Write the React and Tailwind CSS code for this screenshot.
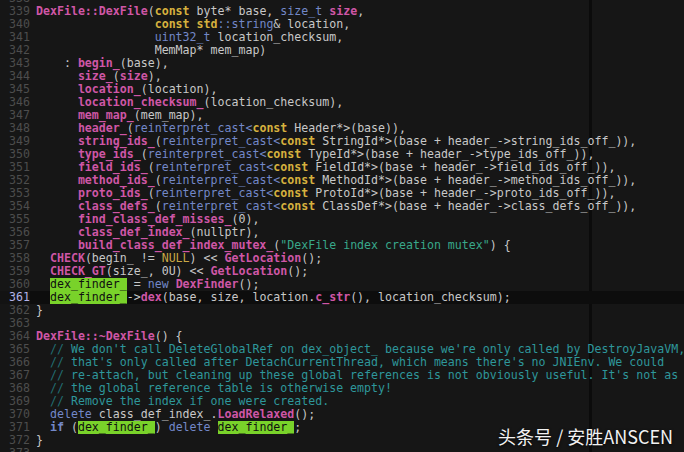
import React from 'react'

const P = 'text-[#cf56a6] font-bold'
const Y = 'text-[#d6b13e] font-bold'
const B = 'text-[#7388c8]'
const BB = 'text-[#7388c8] font-bold'
const S = 'text-[#38a88a]'
const C = 'text-[#2e979b]'
const CS = 'text-[#226e72]'
const N = 'text-[#c9a845]'
const G = 'inline-block h-[13px] align-top bg-[#79d22a] text-[#101010]'

const ind = (n) => ' '.repeat(n)

const cast = (name, type, off) => [
  [ind(6)],
  [name, P],
  ['('],
  ['reinterpret_cast<', B],
  ['const', Y],
  [` ${type}*>(base + header_->${off})),`]
]

const lines = [
  [338, []],
  [339, [['DexFile::DexFile', P], ['('], ['const', Y], [' byte* base, '], ['size_t', B], [' '], ['size', P], [',']]],
  [340, [[ind(17)], ['const', Y], [' '], ['std', Y], ['::string', B], ['& location,']]],
  [341, [[ind(17)], ['uint32_t', B], [' location_checksum,']]],
  [342, [[ind(17) + 'MemMap* mem_map)']]],
  [343, [['    : '], ['begin_', P], ['(base),']]],
  [344, [[ind(6)], ['size_', P], ['('], ['size', P], ['),']]],
  [345, [[ind(6)], ['location_', P], ['(location),']]],
  [346, [[ind(6)], ['location_checksum_', P], ['(location_checksum),']]],
  [347, [[ind(6)], ['mem_map_', P], ['(mem_map),']]],
  [348, [[ind(6)], ['header_', P], ['('], ['reinterpret_cast<', B], ['const', Y], [' Header*>(base)),']]],
  [349, cast('string_ids_', 'StringId', 'string_ids_off_')],
  [350, cast('type_ids_', 'TypeId', 'type_ids_off_')],
  [351, cast('field_ids_', 'FieldId', 'field_ids_off_')],
  [352, cast('method_ids_', 'MethodId', 'method_ids_off_')],
  [353, cast('proto_ids_', 'ProtoId', 'proto_ids_off_')],
  [354, cast('class_defs_', 'ClassDef', 'class_defs_off_')],
  [355, [[ind(6)], ['find_class_def_misses_', P], ['(0),']]],
  [356, [[ind(6)], ['class_def_index_', P], ['(nullptr),']]],
  [357, [[ind(6)], ['build_class_def_index_mutex_', P], ['('], ['"DexFile index creation mutex"', S], [') {']]],
  [358, [['  '], ['CHECK', P], ['(begin_ != '], ['NULL', N], [') << '], ['GetLocation', P], ['();']]],
  [359, [['  '], ['CHECK_GT', P], ['(size_, 0U) << '], ['GetLocation', P], ['();']]],
  [360, [['  '], ['dex_finder_', G], [' = '], ['new', B], [' '], ['DexFinder', P], ['();']]],
  [361, [['  '], ['dex_finder_', G], ['->'], ['dex', P], ['(base, size, location.'], ['c_str', P], ['(), location_checksum);']]],
  [362, [['}']]],
  [363, []],
  [364, [['DexFile::~DexFile', P], ['() {']]],
  [365, [['  '], ['//', CS], [" We don't call DeleteGlobalRef on dex_object_ because we're only called by DestroyJavaVM,", C]]],
  [366, [['  '], ['//', CS], [" that's only called after DetachCurrentThread, which means there's no JNIEnv. We could", C]]],
  [367, [['  '], ['//', CS], [" re-attach, but cleaning up these global references is not obviously useful. It's not as if", C]]],
  [368, [['  '], ['//', CS], [' the global reference table is otherwise empty!', C]]],
  [369, [['  '], ['//', CS], [' Remove the index if one were created.', C]]],
  [370, [['  '], ['delete', B], [' class_def_index_.'], ['LoadRelaxed', P], ['();']]],
  [371, [['  '], ['if', BB], [' ('], ['dex_finder_', G], [') '], ['delete', B], [' '], ['dex_finder_', G], [';']]],
  [372, [['}']]],
  [373, []]
]

function Line({ num, tokens }) {
  const current = num === 361
  return (
    <div className={'flex h-[13px] leading-[12px] ' + (current ? 'bg-[#0d0d0d]' : '')}>
      <div className={'w-[30px] shrink-0 text-right ' + (current ? 'text-[#b3b3ea] bg-[#131313]' : 'text-[#4d4d4d]')}>
        {num}
      </div>
      <div className="pl-[6px] whitespace-pre text-[#c8c8c8]">
        {tokens.map((t, i) => (
          <span key={i} className={t[1] || ''}>{t[0]}</span>
        ))}
      </div>
    </div>
  )
}

export default function App() {
  return (
    <div className="relative w-[684px] h-[452px] overflow-hidden bg-[#161616] font-['DejaVu_Sans_Mono',monospace] text-[11.6px]">
      <div className="absolute top-0 bottom-0 left-[589px] w-[3px] bg-[#0b0b0b]" />
      <div className="relative -mt-[8px] flex flex-col">
        {lines.map(([num, tokens]) => (
          <Line key={num} num={num} tokens={tokens} />
        ))}
      </div>
      <div className="absolute right-[11px] bottom-[5px] text-[18px] leading-[22px] text-[#f2f2f2] font-['Noto_Sans_CJK_SC',sans-serif] [text-shadow:0_1px_3px_rgba(0,0,0,0.9)]">
        头条号 / 安胜ANSCEN
      </div>
    </div>
  )
}
